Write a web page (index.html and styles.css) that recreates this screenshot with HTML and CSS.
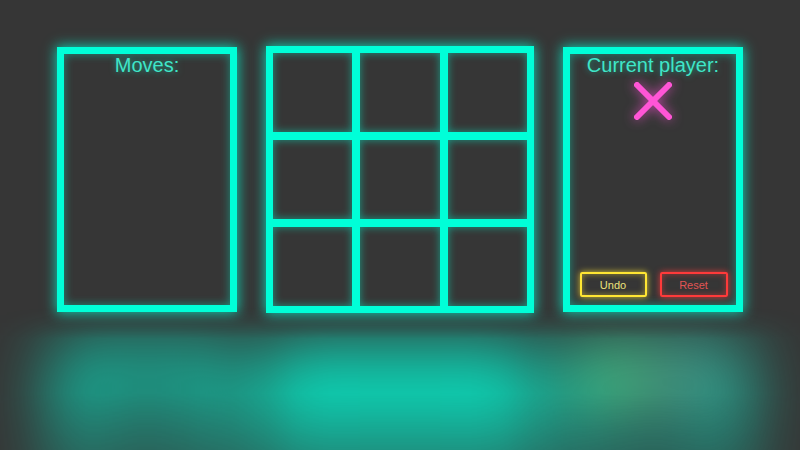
FILE: index.html
```html
<!DOCTYPE html>
<html lang="en">
<head>
<meta charset="utf-8">
<title>Neon Tic-Tac-Toe</title>
<link rel="stylesheet" href="styles.css">
</head>
<body>
<main class="scene">
  <div class="row">
    <section class="panel moves">
      <h2 class="title">Moves:</h2>
    </section>
    <section class="board">
      <div class="cell"></div><div class="cell"></div><div class="cell"></div>
      <div class="cell"></div><div class="cell"></div><div class="cell"></div>
      <div class="cell"></div><div class="cell"></div><div class="cell"></div>
    </section>
    <section class="panel status">
      <h2 class="title">Current player:</h2>
      <svg class="mark" width="40" height="40" viewBox="0 0 40 40" aria-label="X">
        <line x1="4" y1="4" x2="36" y2="36"/>
        <line x1="36" y1="4" x2="4" y2="36"/>
      </svg>
      <div class="actions">
        <button class="btn undo">Undo</button>
        <button class="btn reset">Reset</button>
      </div>
    </section>
  </div>
  <div class="mirror" aria-hidden="true">
    <div class="row flip">
      <div class="ghost side"></div>
      <div class="ghost grid"></div>
      <div class="ghost side right">
        <div class="ghost-actions">
          <div class="ghost-btn yellow"></div>
          <div class="ghost-btn red"></div>
        </div>
      </div>
    </div>
  </div>
</main>
</body>
</html>
```
FILE: styles.css
```css
html, body {
  margin: 0;
  padding: 0;
  height: 100%;
}
body {
  background: #363636;
  overflow: hidden;
  font-family: "Liberation Sans", Arial, sans-serif;
}
.scene {
  height: 450px;
  overflow: hidden;
  box-sizing: border-box;
  display: flex;
  flex-direction: column;
  align-items: center;
  padding-top: 47px;
}
.row {
  display: flex;
  gap: 29px;
}
.panel {
  box-sizing: border-box;
  width: 180px;
  height: 265px;
  border: 7px solid #00ffd8;
  box-shadow: 0 0 12px 1px rgba(0, 255, 216, 0.75), inset 0 0 10px rgba(0, 255, 216, 0.45);
  display: flex;
  flex-direction: column;
  align-items: center;
}
.title {
  margin: 0;
  font-weight: normal;
  font-size: 20px;
  line-height: 22px;
  color: #3fe6c8;
  text-shadow: 0 0 6px rgba(0, 255, 216, 0.5);
}
.board {
  box-sizing: border-box;
  width: 268px;
  height: 267px;
  margin-top: -1px;
  padding: 7px;
  background: #00ffd8;
  display: grid;
  grid-template-columns: repeat(3, 1fr);
  grid-template-rows: repeat(3, 1fr);
  gap: 8px;
  box-shadow: 0 0 12px 1px rgba(0, 255, 216, 0.75);
}
.cell {
  background: #363636;
  box-shadow: inset 0 0 9px rgba(0, 255, 216, 0.5);
}
.mark {
  margin-top: 5px;
  overflow: visible;
  filter: drop-shadow(0 0 6px rgba(255, 80, 215, 0.75));
}
.mark line {
  stroke: #ff55d6;
  stroke-width: 6;
  stroke-linecap: round;
}
.actions {
  margin-top: auto;
  margin-bottom: 8px;
  display: flex;
  gap: 13px;
  padding-left: 1px;
}
.btn {
  box-sizing: border-box;
  width: 67px;
  height: 25px;
  background: transparent;
  border: 2px solid;
  border-radius: 2px;
  font-family: "Liberation Sans", Arial, sans-serif;
  font-size: 11px;
  padding: 0;
  cursor: pointer;
}
.undo {
  border-color: #ffe633;
  color: #ece27a;
  box-shadow: 0 0 6px rgba(255, 230, 51, 0.8), inset 0 0 6px rgba(255, 230, 51, 0.5);
}
.reset {
  width: 68px;
  border-color: #ff3a3a;
  color: #e25454;
  box-shadow: 0 0 6px rgba(255, 58, 58, 0.8), inset 0 0 6px rgba(255, 58, 58, 0.5);
}
.mirror {
  flex: none;
  box-sizing: border-box;
  height: 144px;
  margin: -6px -100px 0;
  padding: 38px 100px 0;
  overflow: hidden;
  -webkit-mask-image: linear-gradient(to bottom, transparent 0%, #000 22%, #000 60%, rgba(0,0,0,0.65) 100%);
  mask-image: linear-gradient(to bottom, transparent 0%, #000 22%, #000 60%, rgba(0,0,0,0.65) 100%);
}
.flip {
  transform: scaleY(-1);
  filter: blur(34px);
}
.ghost {
  box-sizing: border-box;
  height: 265px;
  border: 20px solid rgba(0, 255, 216, 0.95);
}
.ghost.side {
  width: 180px;
  background: rgba(0, 255, 216, 0.36);
  display: flex;
  flex-direction: column;
}
.ghost.grid {
  width: 268px;
  background: rgba(0, 255, 216, 0.72);
}
.ghost-actions {
  margin-top: auto;
  display: flex;
  gap: 13px;
  justify-content: center;
}
.ghost-btn {
  width: 60px;
  height: 30px;
}
.ghost-btn.yellow {
  background: rgba(190, 200, 70, 0.75);
}
.ghost-btn.red {
  background: rgba(160, 90, 95, 0.85);
}
```
